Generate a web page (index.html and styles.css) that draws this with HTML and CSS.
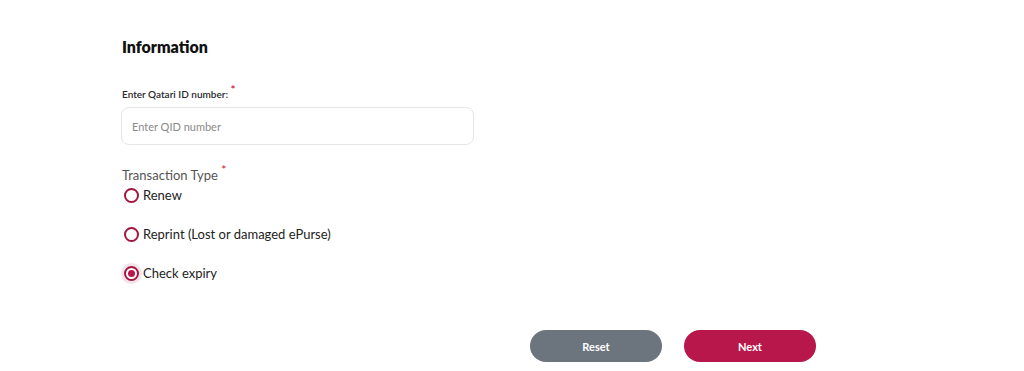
FILE: index.html
```html
<!DOCTYPE html>
<html lang="en">
  <head>
    <meta charset="UTF-8" />
    <meta name="viewport" content="width=device-width, initial-scale=1.0" />
    <title>ePurse Information</title>
    <link rel="stylesheet" href="styles.css">
  </head>
  <body>
    <div class="page">
      <h2 class="title">Information</h2>

      <!-- QID input -->
      <div class="field">
        <label class="label" for="qid">Enter Qatari ID number: <span class="req">*</span></label>
        <input id="qid" class="input" type="text" placeholder="Enter QID number" />
      </div>

      <!-- transaction type -->
      <div class="group">
        <div class="group-title">Transaction Type <span class="req">*</span></div>
        <label class="radio">
          <input type="radio" name="type" />
          <span class="dot"></span>
          Renew
        </label>
        <label class="radio">
          <input type="radio" name="type" />
          <span class="dot"></span>
          Reprint (Lost or damaged ePurse)
        </label>
        <label class="radio">
          <input type="radio" name="type" checked />
          <span class="dot"></span>
          Check expiry
        </label>
      </div>

      <div class="actions">
        <button class="btn reset">Reset</button>
        <button class="btn next">Next</button>
      </div>
    </div>
  </body>
</html>
```

FILE: styles.css
```css
body {
  margin: 0;
  background: white;
  font-family: Lato, "Noto Sans", sans-serif;
  color: #222;
}

.page {
  padding: 36px 0 0 122px;
  width: 694px;
}

.title {
  margin: 0;
  font-size: 16px;
  font-weight: 800;
  color: #111;
  line-height: 22px;
}

.field {
  margin-top: 29px;
  width: 353px;
}

.label {
  display: block;
  font-size: 10px;
  font-weight: 600;
  color: #2a2a2a;
  line-height: 14px;
}

.req {
  color: #c8102e;
  font-size: 12px;
  position: relative;
  top: -4px;
}

.input {
  display: block;
  box-sizing: border-box;
  width: 353px;
  height: 38px;
  margin-top: 6px;
  margin-left: -1px;
  padding: 0 10px;
  border: 1px solid #e6e6e6;
  border-radius: 8px;
  font-family: inherit;
  font-size: 11px;
  outline: none;
}

.input::placeholder {
  color: #8a8a8a;
}

.group {
  margin-top: 21px;
}

.group-title {
  font-size: 13px;
  color: #555;
  line-height: 18px;
}

.group-title .req {
  top: -6px;
}

.radio {
  display: flex;
  align-items: center;
  gap: 4px;
  height: 20px;
  font-size: 13px;
  color: #222;
  margin-top: 19px;
  cursor: pointer;
}

.radio:first-of-type {
  margin-top: 0;
}

.radio input {
  display: none;
}

.dot {
  width: 15px;
  height: 15px;
  box-sizing: border-box;
  border: 2px solid #a3163f;
  border-radius: 50%;
  margin-left: 2px;
  position: relative;
}

.radio input:checked + .dot {
  box-shadow: 0 0 0 3px rgba(184, 23, 75, 0.12);
}

.radio input:checked + .dot::after {
  content: "";
  position: absolute;
  left: 2px;
  top: 2px;
  width: 7px;
  height: 7px;
  border-radius: 50%;
  background: #b8174b;
}

.actions {
  display: flex;
  justify-content: flex-end;
  gap: 22px;
  margin-top: 47px;
}

.btn {
  width: 132px;
  height: 32px;
  border: none;
  border-radius: 16px;
  color: white;
  font-family: inherit;
  font-size: 11px;
  font-weight: 700;
  cursor: pointer;
}

.reset {
  background: #6c757d;
}

.next {
  background: #b8174b;
}
```
